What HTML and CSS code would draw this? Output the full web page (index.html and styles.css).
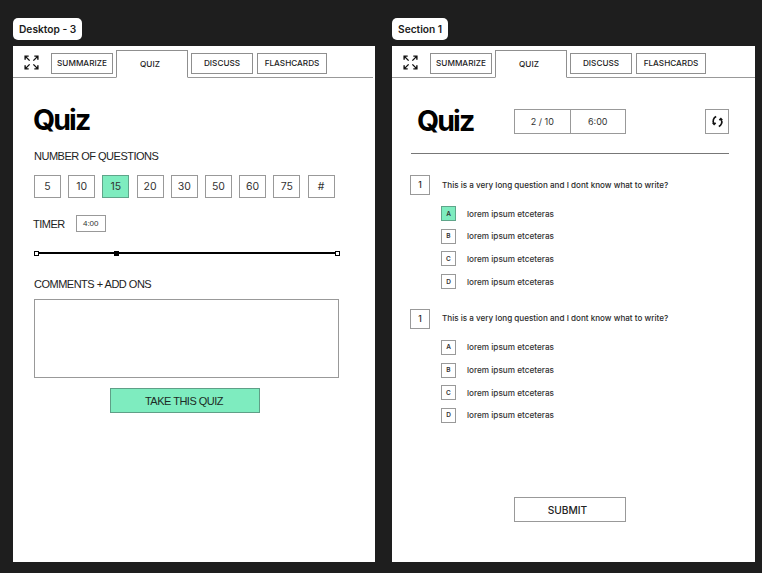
FILE: index.html
```html
<!DOCTYPE html>
<html lang="en">
<head>
<meta charset="utf-8">
<title>Quiz</title>
<link rel="stylesheet" href="styles.css">
</head>
<body>
<main class="canvas">
  <section class="column">
    <div class="label">Desktop - 3</div>
    <div class="frame">
      <header class="tabs">
        <svg class="expand" viewBox="0 0 16 16" aria-hidden="true"><path d="M1.2 5V1.2H5M1.2 1.2L6 6M11 1.2h3.8V5M14.8 1.2L10 6M1.2 11v3.8H5M1.2 14.8L6 10M11 14.8h3.8V11M14.8 14.8L10 10"/></svg>
        <span class="tab tab-sum">SUMMARIZE</span>
        <span class="tab tab-active">QUIZ</span>
        <span class="tab tab-dis">DISCUSS</span>
        <span class="tab tab-fla">FLASHCARDS</span>
      </header>
      <div class="setup">
        <h1 class="title">Quiz</h1>
        <p class="field-label">NUMBER OF QUESTIONS</p>
        <div class="chips">
          <span class="chip">5</span><span class="chip">10</span><span class="chip chip-on">15</span><span class="chip">20</span><span class="chip">30</span><span class="chip">50</span><span class="chip">60</span><span class="chip">75</span><span class="chip">#</span>
        </div>
        <div class="timer">
          <span class="field-label">TIMER</span>
          <span class="timer-box">4:00</span>
        </div>
        <div class="slider">
          <i class="knob knob-start"></i><i class="knob knob-mid"></i><i class="knob knob-end"></i>
        </div>
        <p class="field-label comments">COMMENTS + ADD ONS</p>
        <div class="textbox"></div>
        <button class="take" type="button">TAKE THIS QUIZ</button>
      </div>
    </div>
  </section>

  <section class="column column-right">
    <div class="label">Section 1</div>
    <div class="frame">
      <header class="tabs">
        <svg class="expand" viewBox="0 0 16 16" aria-hidden="true"><path d="M1.2 5V1.2H5M1.2 1.2L6 6M11 1.2h3.8V5M14.8 1.2L10 6M1.2 11v3.8H5M1.2 14.8L6 10M11 14.8h3.8V11M14.8 14.8L10 10"/></svg>
        <span class="tab tab-sum">SUMMARIZE</span>
        <span class="tab tab-active">QUIZ</span>
        <span class="tab tab-dis">DISCUSS</span>
        <span class="tab tab-fla">FLASHCARDS</span>
      </header>
      <div class="run">
        <div class="run-head">
          <h1 class="title">Quiz</h1>
          <div class="stats"><span class="stat">2 / 10</span><span class="stat">6:00</span></div>
          <span class="refresh">
            <svg viewBox="0 0 12 12" aria-hidden="true"><path d="M4.8 1.4A4.5 4.5 0 0 0 2.6 7.8M1.6 7.1l1.3 1.5 1.4-1.3M7.2 10.6A4.5 4.5 0 0 0 9.4 4.2M10.4 4.9L9.1 3.4 7.7 4.7"/></svg>
          </span>
        </div>
        <div class="question">
          <div class="q-row"><span class="q-num">1</span><span class="q-text">This is a very long question and I dont know what to write?</span></div>
          <ul class="options">
            <li class="option"><span class="letter letter-on">A</span>lorem ipsum etceteras</li>
            <li class="option"><span class="letter">B</span>lorem ipsum etceteras</li>
            <li class="option"><span class="letter">C</span>lorem ipsum etceteras</li>
            <li class="option"><span class="letter">D</span>lorem ipsum etceteras</li>
          </ul>
        </div>
        <div class="question">
          <div class="q-row"><span class="q-num">1</span><span class="q-text">This is a very long question and I dont know what to write?</span></div>
          <ul class="options">
            <li class="option"><span class="letter">A</span>lorem ipsum etceteras</li>
            <li class="option"><span class="letter">B</span>lorem ipsum etceteras</li>
            <li class="option"><span class="letter">C</span>lorem ipsum etceteras</li>
            <li class="option"><span class="letter">D</span>lorem ipsum etceteras</li>
          </ul>
        </div>
        <button class="submit" type="button">SUBMIT</button>
      </div>
    </div>
  </section>
</main>
</body>
</html>
```
FILE: styles.css
```css
* { box-sizing: border-box; }
html, body { margin: 0; height: 100%; }
body { background: #1e1e1e; overflow: hidden; font-family: "Inter", "Liberation Sans", sans-serif; color: #1c1c1c; }
.canvas { display: flex; gap: 17px; padding: 18px 7px 11px 13px; height: 573px; }
.column { width: 362px; display: flex; flex-direction: column; }
.column-right { width: 363px; }
.label { align-self: flex-start; height: 22px; padding: 0 6px; border-radius: 5px; background: #fff; font-size: 10.2px; font-weight: 600; line-height: 23px; margin-bottom: 6px; }
.frame { flex: 1; background: #fff; display: flex; flex-direction: column; }

.tabs { position: relative; display: flex; align-items: flex-end; height: 31.5px; padding-left: 11px; border-bottom: 1px solid #999; margin-right: 2px; }
.column-right .tabs { margin-right: 0; }
.expand { width: 15px; height: 15px; margin: 0 12px 7px 0; fill: none; stroke: #111; stroke-width: 1.5; }
.tab { display: flex; align-items: center; justify-content: center; height: 21px; margin-bottom: 3px; border: 1px solid #8f8f8f; font-size: 8.2px; font-weight: 500; color: #222; }
.tab-sum { width: 62px; }
.tab-active { width: 72px; height: 28px; margin: 0 3px -1px; padding-right: 4px; border-bottom: 1px solid #fff; }
.tab-dis { width: 62px; margin-right: 4px; }
.tab-fla { width: 70px; }

.setup { padding: 24.5px 0 0 21px; display: flex; flex-direction: column; align-items: flex-start; }
.title { margin: 0 0 0 -1px; font-size: 28.5px; line-height: 36px; font-weight: 700; letter-spacing: -1.9px; color: #000; }
.field-label { margin: 0; font: 11px/14px "Liberation Sans", sans-serif; letter-spacing: -.5px; color: #222; }
.setup > .field-label:first-of-type { margin-top: 11px; }
.chips { display: flex; gap: 7.2px; margin-top: 12px; }
.chip { width: 27px; height: 23px; display: flex; align-items: center; justify-content: center; border: 1px solid #999; font-size: 10.5px; color: #333; }
.chip-on { background: #7eecbf; border-color: #5fa58a; }
.timer { display: flex; align-items: center; gap: 11px; margin: 17px 0 0 -1px; }
.timer-box { width: 30px; height: 17px; display: flex; align-items: center; justify-content: center; border: 1px solid #999; font: 8px "Liberation Sans", sans-serif; color: #333; }
.slider { position: relative; width: 302px; height: 2px; margin: 20px 0 0 2px; background: #000; }
.knob { position: absolute; top: -1.5px; width: 5px; height: 5px; border: 1px solid #000; background: #fff; }
.knob-start { left: -2px; }
.knob-mid { left: 78px; background: #000; }
.knob-end { right: -2px; }
.comments { margin-top: 23px; }
.textbox { width: 305px; height: 79px; margin-top: 8px; border: 1px solid #999; }
.take { width: 150px; height: 25px; margin: 10px 0 0 76px; padding: 0 2px 0 0; background: #7eecbf; border: 1px solid #5f9f87; border-radius: 0; font: 11px "Liberation Sans", sans-serif; letter-spacing: -.5px; color: #1c2b25; }

.run { padding: 31.5px 26px 0 19px; display: flex; flex-direction: column; flex: 1; }
.run-head { display: flex; align-items: center; height: 45px; padding: 0 0 19px 6px; border-bottom: 1px solid #777; margin-bottom: 21px; }
.run-head .title { width: 97px; line-height: 25px; margin: -2px 0 0; }
.stats { display: flex; }
.stat { width: 56.5px; height: 25px; display: flex; align-items: center; justify-content: center; border: 1px solid #999; font-size: 9px; color: #333; }
.stat + .stat { margin-left: -1px; }
.refresh { width: 24px; height: 25px; margin-left: auto; display: flex; align-items: center; justify-content: center; border: 1px solid #999; }
.refresh svg { width: 13px; height: 13px; fill: none; stroke: #111; stroke-width: 1.5; }
.question { margin-bottom: 19.6px; }
.q-row { display: flex; align-items: center; gap: 12px; margin-left: -1px; }
.q-num { width: 20px; height: 20px; display: flex; align-items: center; justify-content: center; border: 1px solid #999; font-size: 8.5px; font-weight: 500; }
.q-text { font-size: 8.1px; font-weight: 500; color: #2a2a2a; margin-top: -1px; }
.options { list-style: none; margin: 11.3px 0 0 30px; padding: 0; display: flex; flex-direction: column; gap: 7.6px; }
.option { display: flex; align-items: center; height: 15px; font-size: 8.2px; font-weight: 500; color: #333; }
.letter { width: 15px; height: 15px; margin-right: 11px; display: flex; align-items: center; justify-content: center; border: 1px solid #999; font-size: 6.5px; font-weight: 600; }
.letter-on { background: #7eecbf; border-color: #5fa58a; }
.submit { width: 112px; height: 25px; margin: 55px 0 0 103px; padding: 0 5px 0 0; background: #fff; border: 1px solid #999; border-radius: 0; font: 500 10.2px "Inter", sans-serif; color: #222; }
```
